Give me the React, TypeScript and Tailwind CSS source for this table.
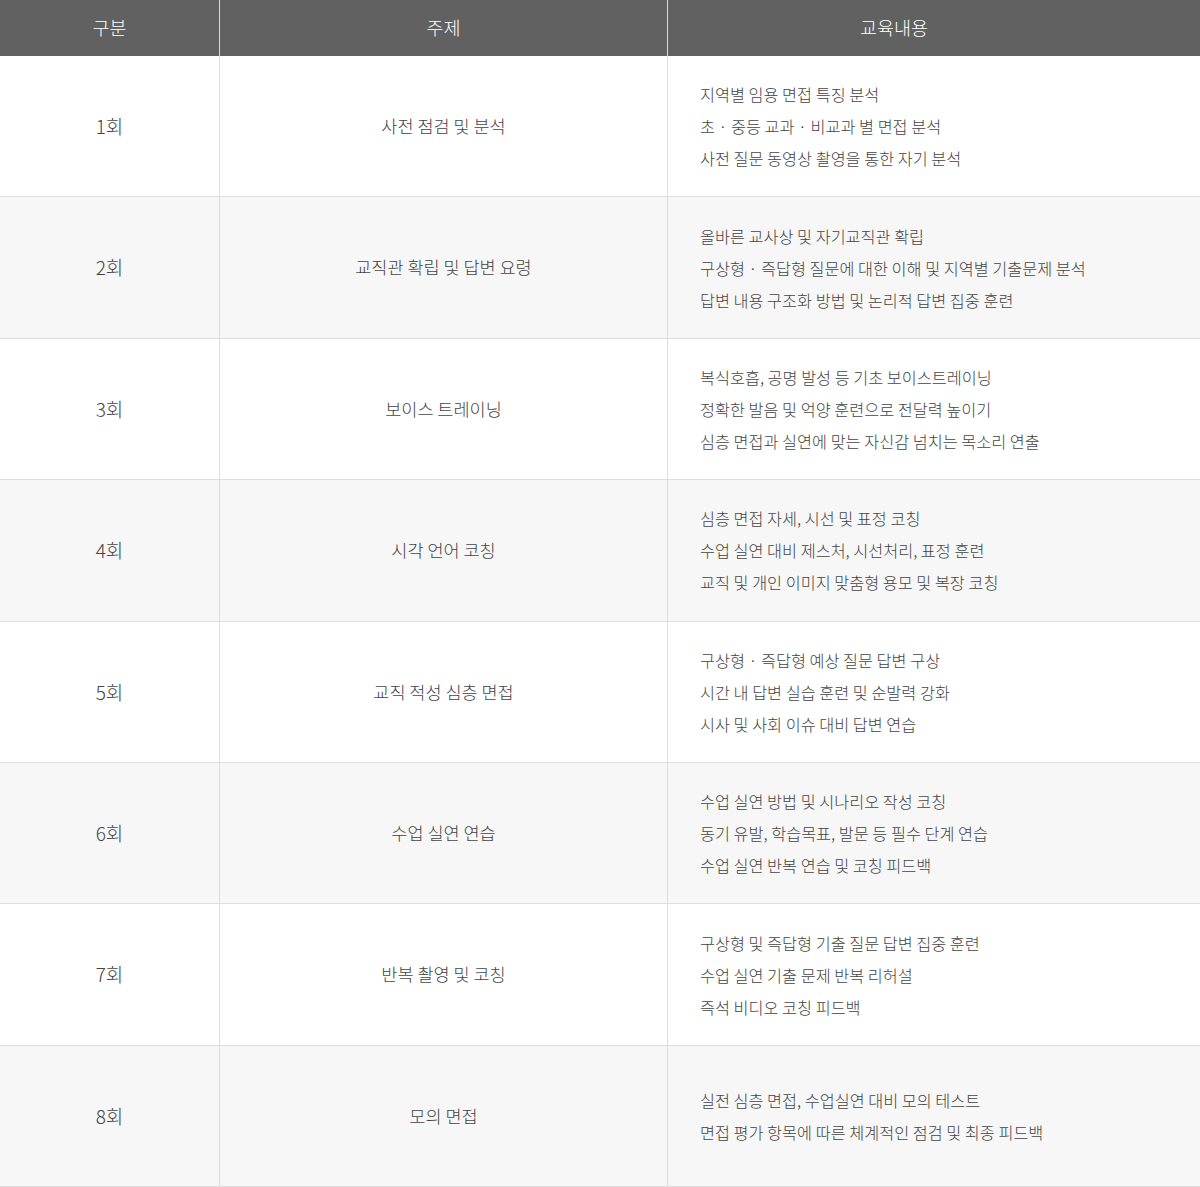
import React from 'react';

type Session = {
  no: string;
  topic: string;
  items: string[];
};

const sessions: Session[] = [
  {
    no: '1회',
    topic: '사전 점검 및 분석',
    items: ['지역별 임용 면접 특징 분석', '초 · 중등 교과 · 비교과 별 면접 분석', '사전 질문 동영상 촬영을 통한 자기 분석'],
  },
  {
    no: '2회',
    topic: '교직관 확립 및 답변 요령',
    items: [
      '올바른 교사상 및 자기교직관 확립',
      '구상형 · 즉답형 질문에 대한 이해 및 지역별 기출문제 분석',
      '답변 내용 구조화 방법 및 논리적 답변 집중 훈련',
    ],
  },
  {
    no: '3회',
    topic: '보이스 트레이닝',
    items: [
      '복식호흡, 공명 발성 등 기초 보이스트레이닝',
      '정확한 발음 및 억양 훈련으로 전달력 높이기',
      '심층 면접과 실연에 맞는 자신감 넘치는 목소리 연출',
    ],
  },
  {
    no: '4회',
    topic: '시각 언어 코칭',
    items: [
      '심층 면접 자세, 시선 및 표정 코칭',
      '수업 실연 대비 제스처, 시선처리, 표정 훈련',
      '교직 및 개인 이미지 맞춤형 용모 및 복장 코칭',
    ],
  },
  {
    no: '5회',
    topic: '교직 적성 심층 면접',
    items: ['구상형 · 즉답형 예상 질문 답변 구상', '시간 내 답변 실습 훈련 및 순발력 강화', '시사 및 사회 이슈 대비 답변 연습'],
  },
  {
    no: '6회',
    topic: '수업 실연 연습',
    items: ['수업 실연 방법 및 시나리오 작성 코칭', '동기 유발, 학습목표, 발문 등 필수 단계 연습', '수업 실연 반복 연습 및 코칭 피드백'],
  },
  {
    no: '7회',
    topic: '반복 촬영 및 코칭',
    items: ['구상형 및 즉답형 기출 질문 답변 집중 훈련', '수업 실연 기출 문제 반복 리허설', '즉석 비디오 코칭 피드백'],
  },
  {
    no: '8회',
    topic: '모의 면접',
    items: ['실전 심층 면접, 수업실연 대비 모의 테스트', '면접 평가 항목에 따른 체계적인 점검 및 최종 피드백'],
  },
];

const App: React.FC = () => {
  return (
    <div className="w-[1200px] bg-white font-['Noto_Sans_CJK_KR','Noto_Sans',sans-serif] font-light">
      {/* Header */}
      <div className="grid grid-cols-[220px_448px_1fr] h-[56px] bg-[#616161] text-white text-[18.5px]">
        <div className="flex items-center justify-center border-r border-[#dcdcdc]">구분</div>
        <div className="flex items-center justify-center border-r border-[#dcdcdc]">주제</div>
        {/* header label sits a little left of the column centre */}
        <div className="flex items-center justify-center pr-[80px]">교육내용</div>
      </div>

      {/* Rows */}
      {sessions.map((s, idx) => (
        <div
          key={s.no}
          className={`grid grid-cols-[220px_448px_1fr] h-[141.4px] border-b border-[#dedede] text-[#444] ${
            idx % 2 === 1 ? 'bg-[#f7f7f7]' : 'bg-white'
          }`}
        >
          <div className="flex items-center justify-center border-r border-[#dedede] text-[19px]">{s.no}</div>
          <div className="flex items-center justify-center border-r border-[#dedede] text-[17.5px]">{s.topic}</div>
          <div className="flex flex-col justify-center pl-[32px] text-[16.3px]">
            {s.items.map((it) => (
              <p key={it} className="leading-[32px]">
                {it}
              </p>
            ))}
          </div>
        </div>
      ))}
    </div>
  );
};

export default App;
